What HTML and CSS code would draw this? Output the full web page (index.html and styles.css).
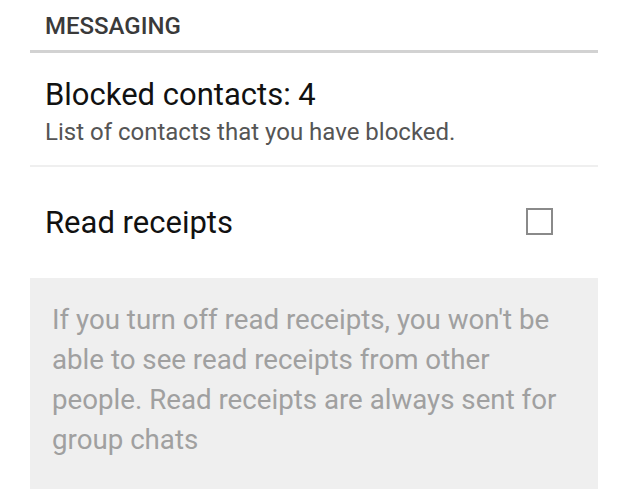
FILE: index.html
```html
<!DOCTYPE html>
<html>
<head>
<meta charset="utf-8">
<link rel="stylesheet" href="styles.css">
</head>
<body>
<div class="page">
  <div class="section-header">MESSAGING</div>
  <div class="pref pref-blocked">
    <div class="pref-title">Blocked contacts: 4</div>
    <div class="pref-summary">List of contacts that you have blocked.</div>
  </div>
  <div class="pref pref-toggle">
    <div class="pref-title">Read receipts</div>
    <div class="checkbox"></div>
  </div>
  <div class="note">If you turn off read receipts, you won't be able to see read receipts from other people. Read receipts are always sent for group chats</div>
</div>
</body>
</html>
```
FILE: styles.css
```css
html, body {
  margin: 0;
  padding: 0;
  background: #ffffff;
}
.page {
  width: 568px;
  margin-left: 30px;
  font-family: Roboto, "Liberation Sans", sans-serif;
}
.section-header {
  font-size: 24px;
  font-weight: 500;
  color: #3a3a3a;
  line-height: 28px;
  padding: 12px 0 10px 15px;
  border-bottom: 3px solid #d2d2d2;
}
.pref {
  padding-left: 15px;
}
.pref-blocked {
  padding-top: 24px;
  padding-bottom: 18px;
  border-bottom: 2px solid #efefef;
}
.pref-title {
  font-size: 31px;
  line-height: 36px;
  color: #111111;
}
.pref-summary {
  font-size: 24px;
  line-height: 30px;
  color: #555555;
  margin-top: 4px;
}
.pref-toggle {
  display: flex;
  align-items: center;
  justify-content: space-between;
  height: 111px;
  padding-right: 45px;
}
.checkbox {
  width: 23px;
  height: 23px;
  border: 2px solid #8a8a8a;
  margin-top: -2px;
}
.note {
  background: #efefef;
  padding: 22px 30px 29px 22px;
  font-size: 27.7px;
  line-height: 40px;
  color: #a0a0a0;
}
```
